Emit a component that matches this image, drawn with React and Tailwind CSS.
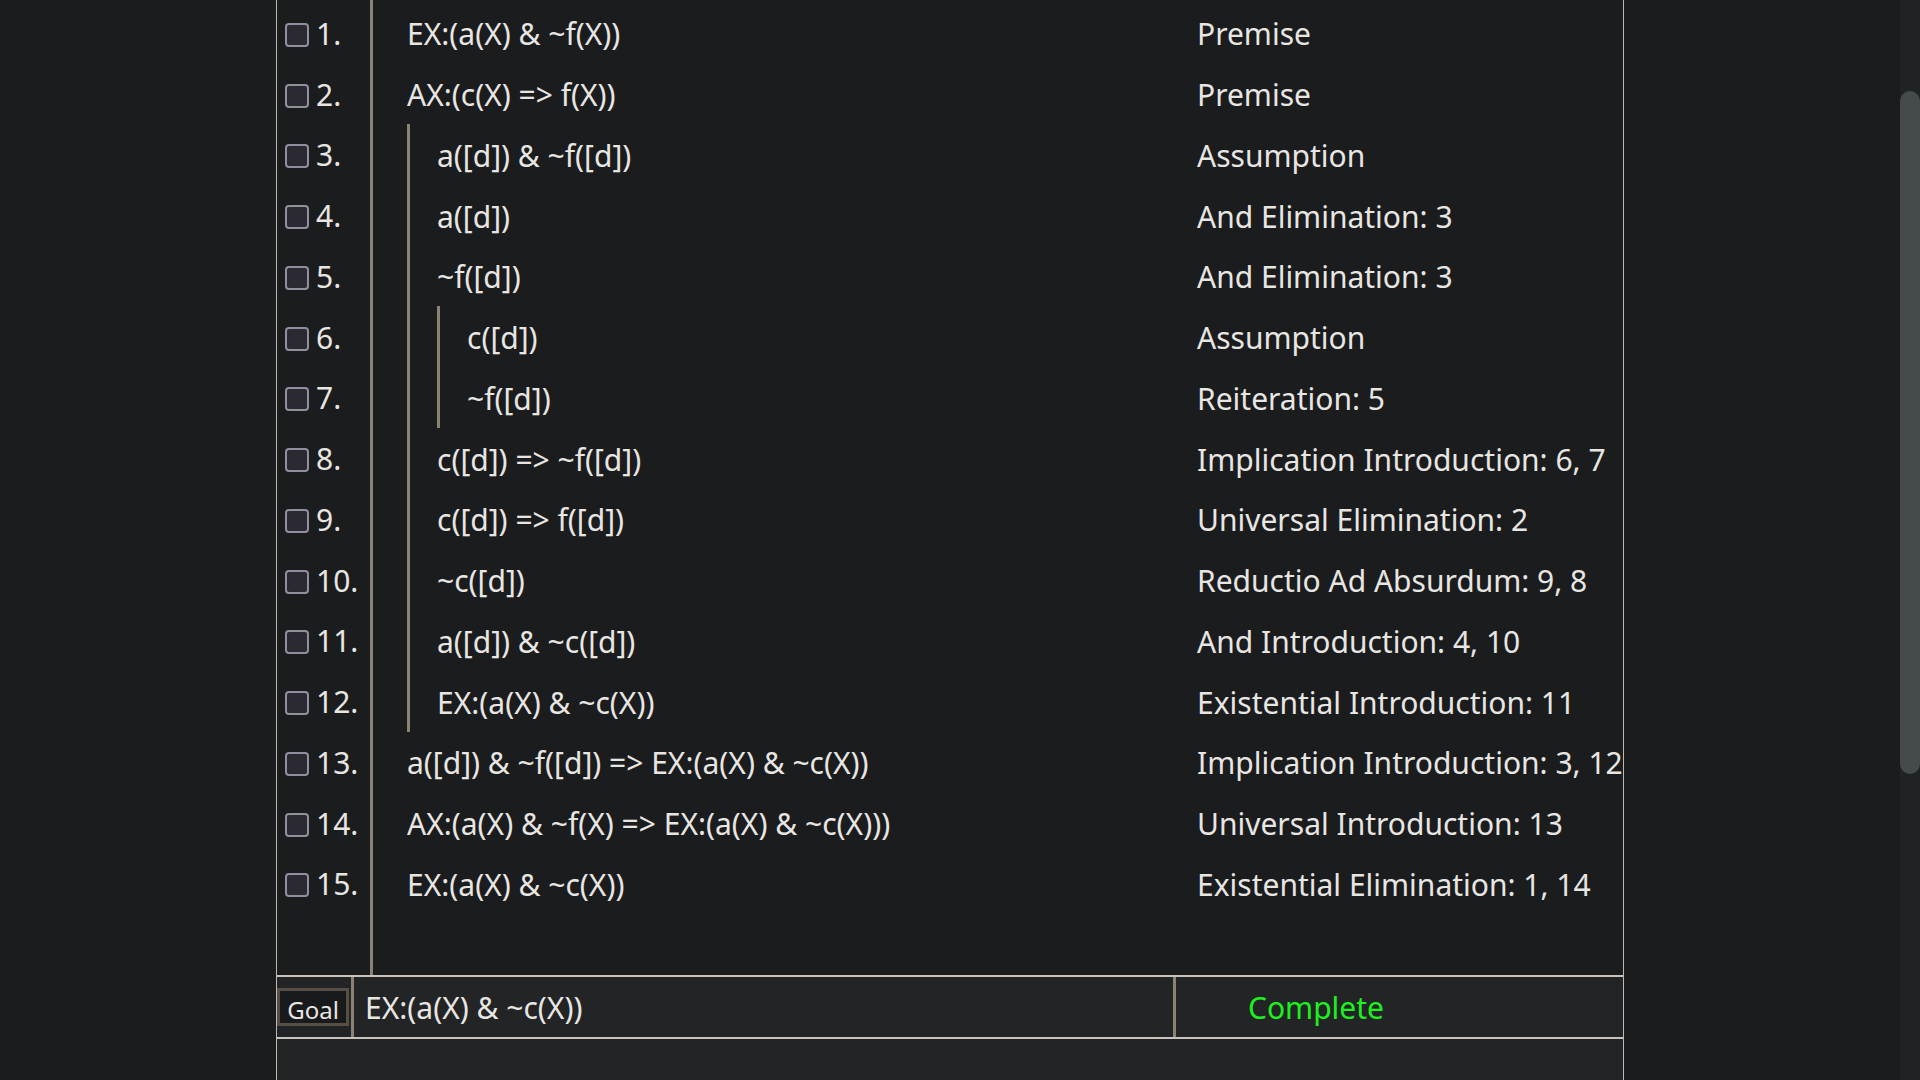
import React from "react";

const rows = [
  { n: 1, d: 0, f: "EX:(a(X) & ~f(X))", j: "Premise" },
  { n: 2, d: 0, f: "AX:(c(X) => f(X))", j: "Premise" },
  { n: 3, d: 1, f: "a([d]) & ~f([d])", j: "Assumption" },
  { n: 4, d: 1, f: "a([d])", j: "And Elimination: 3" },
  { n: 5, d: 1, f: "~f([d])", j: "And Elimination: 3" },
  { n: 6, d: 2, f: "c([d])", j: "Assumption" },
  { n: 7, d: 2, f: "~f([d])", j: "Reiteration: 5" },
  { n: 8, d: 1, f: "c([d]) => ~f([d])", j: "Implication Introduction: 6, 7" },
  { n: 9, d: 1, f: "c([d]) => f([d])", j: "Universal Elimination: 2" },
  { n: 10, d: 1, f: "~c([d])", j: "Reductio Ad Absurdum: 9, 8" },
  { n: 11, d: 1, f: "a([d]) & ~c([d])", j: "And Introduction: 4, 10" },
  { n: 12, d: 1, f: "EX:(a(X) & ~c(X))", j: "Existential Introduction: 11" },
  { n: 13, d: 0, f: "a([d]) & ~f([d]) => EX:(a(X) & ~c(X))", j: "Implication Introduction: 3, 12" },
  { n: 14, d: 0, f: "AX:(a(X) & ~f(X) => EX:(a(X) & ~c(X)))", j: "Universal Introduction: 13" },
  { n: 15, d: 0, f: "EX:(a(X) & ~c(X))", j: "Existential Elimination: 1, 14" },
];

function Formula({ depth, text }) {
  if (depth === 0) {
    return <span className="whitespace-pre pt-[2px]">{text}</span>;
  }
  return (
    <div className="h-full flex items-center border-l-[3px] border-[#8c8273] pl-[27px]">
      <Formula depth={depth - 1} text={text} />
    </div>
  );
}

export default function App() {
  return (
    <div className="flex h-screen w-full overflow-hidden bg-[#1b1c1e] font-['Noto_Sans',sans-serif] text-[30px] text-[#e8e6e3]">
      <div className="flex-1 flex justify-center">
        <div className="w-[1348px] h-full flex flex-col border-x border-[#bdb8b1]">
          {/* proof table */}
          <div className="flex h-[975px] shrink-0">
            <div className="w-[96px] shrink-0 border-r-[3px] border-[#8c8273] pt-[2.5px]">
              {rows.map((r) => (
                <div key={r.n} className="h-[60.75px] flex items-center pl-[8px] pt-[4px]">
                  <div className="w-[24px] h-[24px] shrink-0 rounded-[4px] border-2 border-[#8f8f9d] bg-[#2b2a33]" />
                  <span className="ml-[7px] -mt-[3px]">{r.n}.</span>
                </div>
              ))}
            </div>
            <div className="flex-1 pt-[2.5px]">
              {rows.map((r) => (
                <div key={r.n} className="h-[60.75px] flex">
                  <div className="flex-1 h-full flex items-center pl-[34px]">
                    <Formula depth={r.d} text={r.f} />
                  </div>
                  <div className="w-[426px] shrink-0 h-full flex items-center pt-[2px] whitespace-nowrap">
                    {r.j}
                  </div>
                </div>
              ))}
            </div>
          </div>
          {/* goal row */}
          <div className="h-[64px] shrink-0 flex border-y-2 border-[#c8c3bc] bg-[#222426]">
            <div className="w-[77px] shrink-0 flex items-center border-r-[3px] border-[#8c8273]">
              <div className="w-[72px] h-[38px] flex items-center justify-center pt-[5px] border-[3px] border-[#574f46] bg-[#181a1b] text-[24px] leading-none">
                Goal
              </div>
            </div>
            <div className="w-[822px] shrink-0 flex items-center pl-[11px] border-r-[3px] border-[#8c8273]">
              EX:(a(X) &amp; ~c(X))
            </div>
            <div className="flex-1 flex items-center pl-[72px] text-[#1ef01e]">Complete</div>
          </div>
          <div className="flex-1 bg-[#222426]" />
        </div>
      </div>
      {/* scrollbar */}
      <div className="w-[20px] shrink-0 h-full bg-[#202324] pt-[91px]">
        <div className="w-full h-[683px] rounded-full bg-[#454a4d]" />
      </div>
    </div>
  );
}
